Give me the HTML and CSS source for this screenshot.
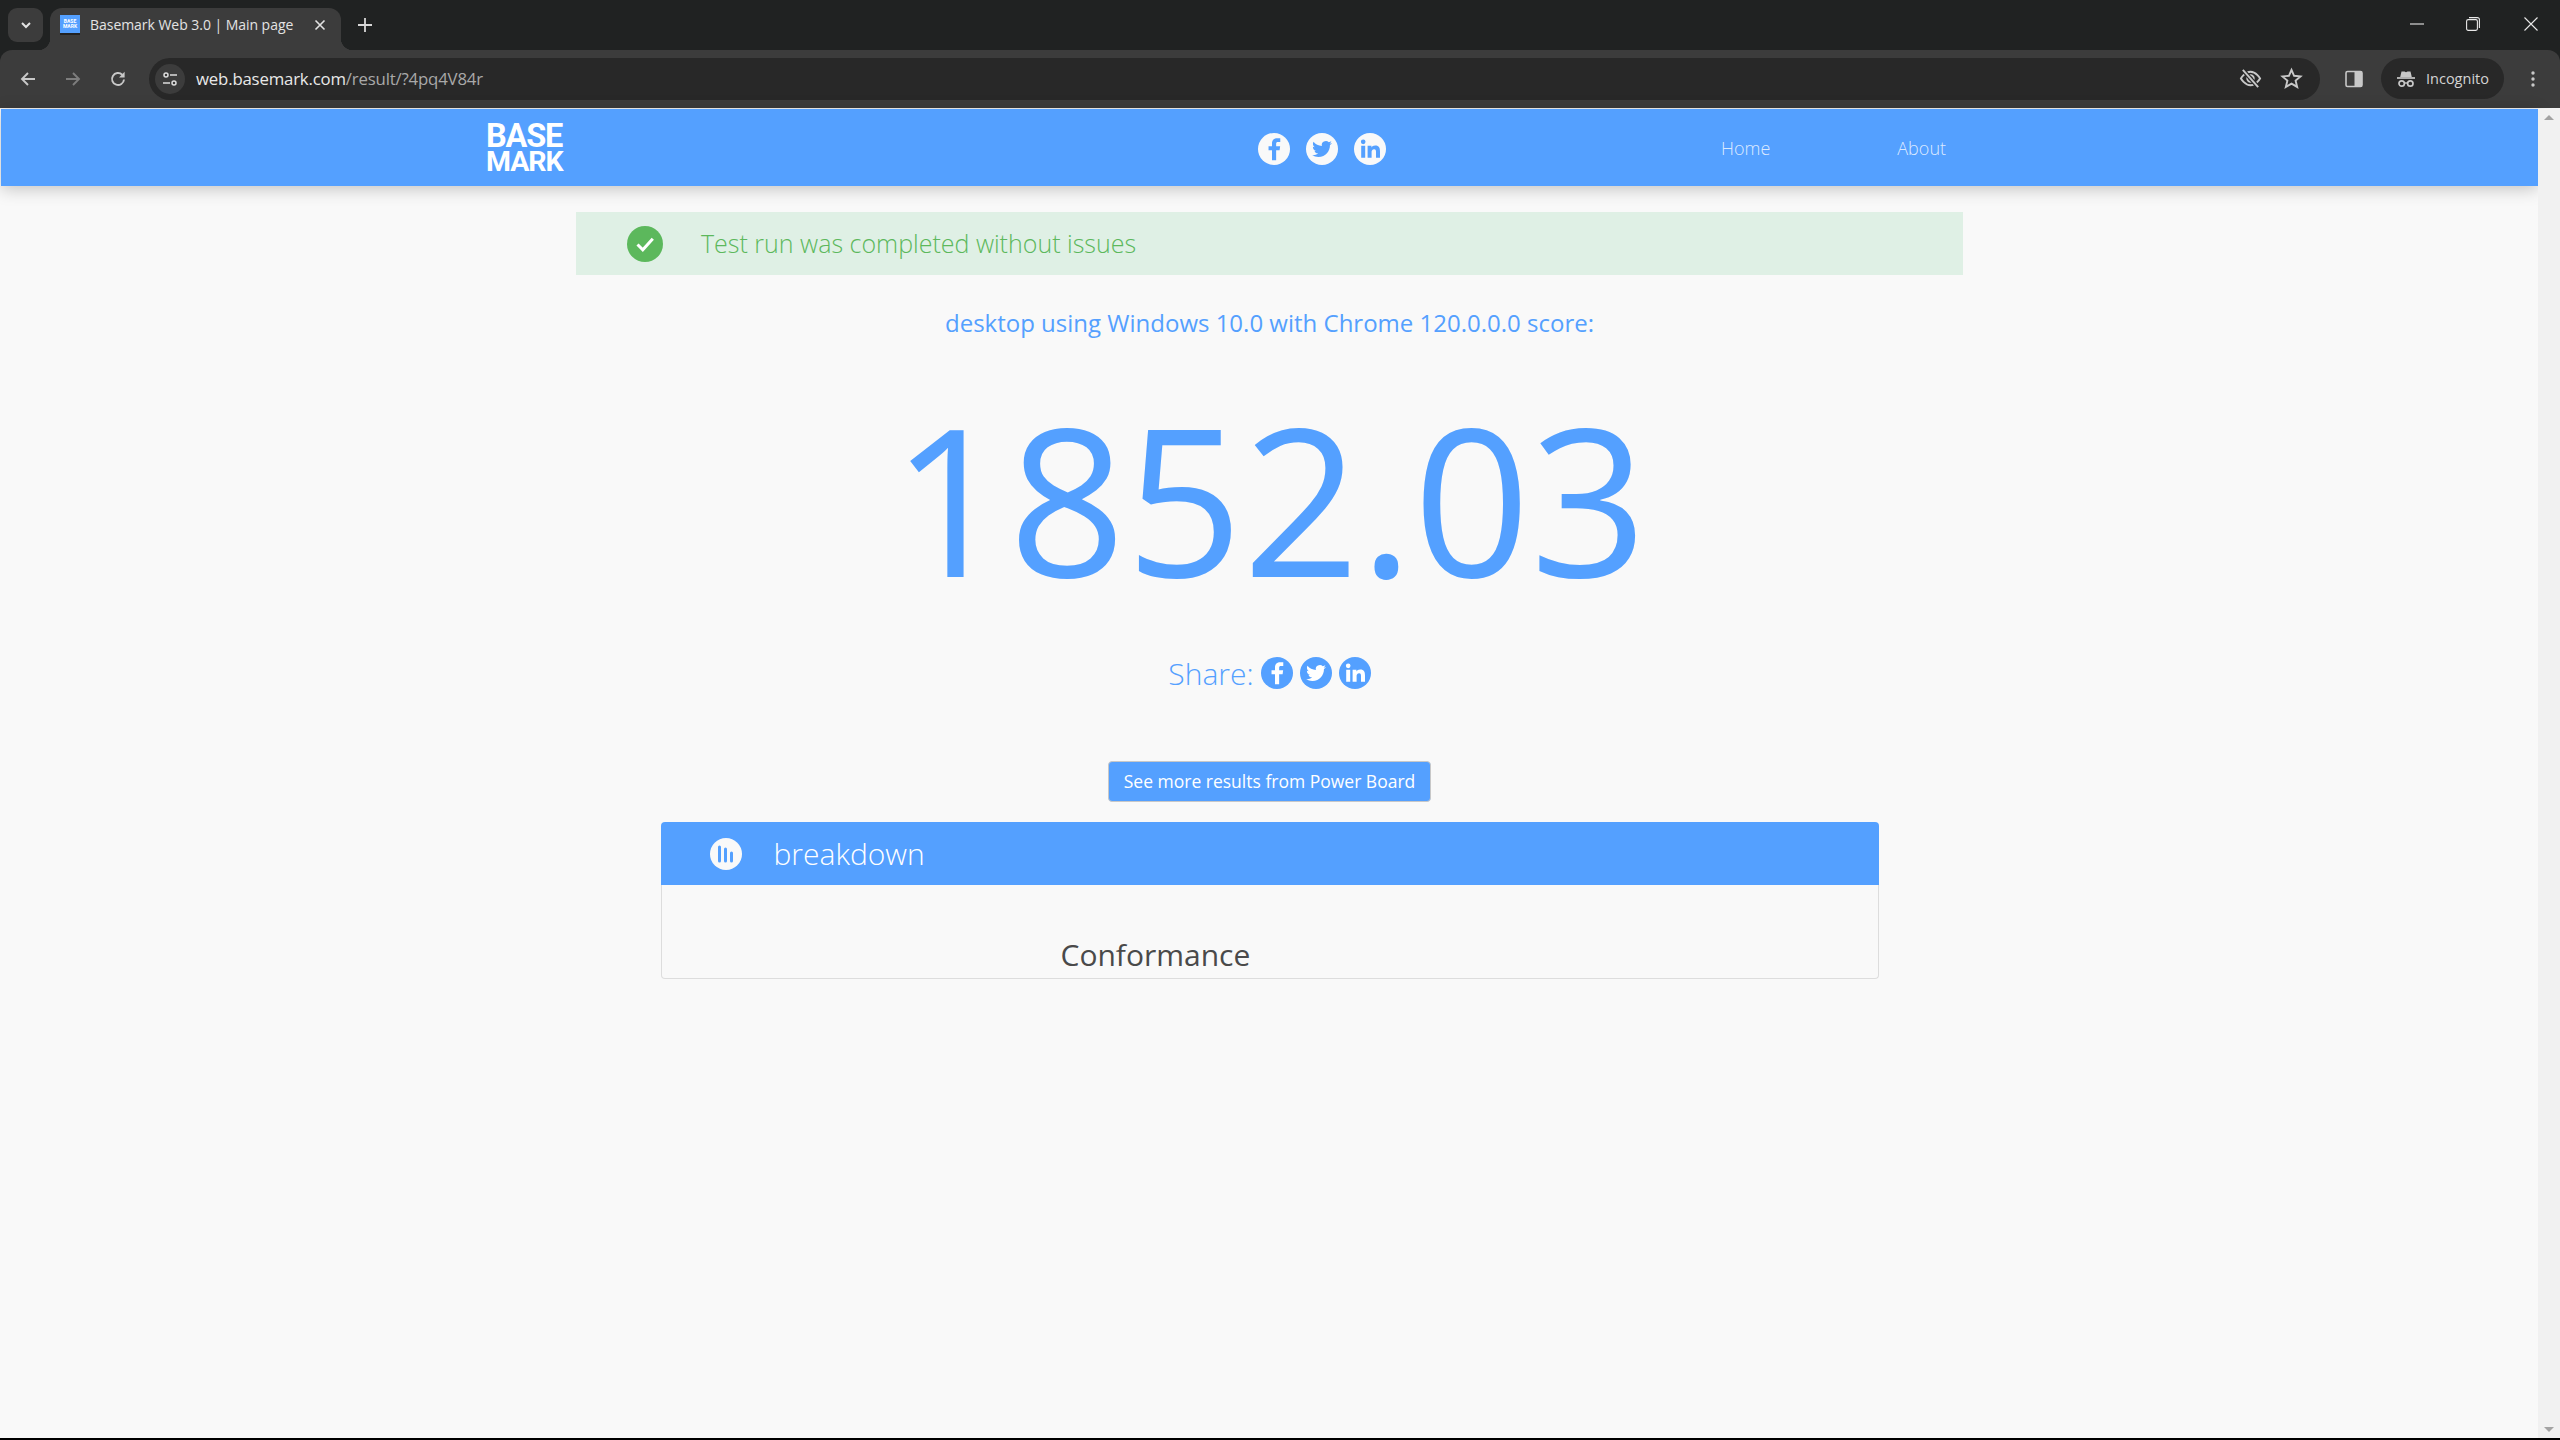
FILE: index.html
```html
<!DOCTYPE html>
<html lang="en">
<head>
<meta charset="utf-8">
<title>Basemark Web 3.0 | Main page</title>
<link rel="stylesheet" href="styles.css">
</head>
<body>
<svg class="defs" width="0" height="0" aria-hidden="true">
  <symbol id="i-fb" viewBox="0 0 24 24"><circle cx="12" cy="12" r="12" fill="currentColor"/><path fill="var(--glyph)" d="M13.6 20.5v-7.6h2.6l.4-3h-3V8.1c0-.9.3-1.4 1.5-1.4h1.6V4c-.3 0-1.2-.1-2.3-.1-2.3 0-3.9 1.4-3.9 4v2h-2.6v3h2.6v7.6z"/></symbol>
  <symbol id="i-tw" viewBox="0 0 24 24"><circle cx="12" cy="12" r="12" fill="currentColor"/><path fill="var(--glyph)" transform="translate(4.6 4.6) scale(.62)" d="M23.953 4.57a10 10 0 01-2.825.775 4.958 4.958 0 002.163-2.723c-.951.555-2.005.959-3.127 1.184a4.92 4.92 0 00-8.384 4.482C7.69 8.095 4.067 6.13 1.64 3.162a4.822 4.822 0 00-.666 2.475c0 1.71.87 3.213 2.188 4.096a4.904 4.904 0 01-2.228-.616v.06a4.923 4.923 0 003.946 4.827 4.996 4.996 0 01-2.212.085 4.936 4.936 0 004.604 3.417 9.867 9.867 0 01-6.102 2.105c-.39 0-.779-.023-1.17-.067a13.995 13.995 0 007.557 2.209c9.053 0 13.998-7.496 13.998-13.985 0-.21 0-.42-.015-.63A9.935 9.935 0 0024 4.59z"/></symbol>
  <symbol id="i-in" viewBox="0 0 24 24"><circle cx="12" cy="12" r="12" fill="currentColor"/><path fill="var(--glyph)" d="M5.4 9.6h3V18.6h-3z M6.9 4.9a1.75 1.75 0 110 3.5 1.75 1.75 0 010-3.5z M10.2 9.6h2.9v1.3c.4-.8 1.4-1.5 2.8-1.5 3 0 3.6 1.9 3.6 4.5v4.7h-3v-4.2c0-1 0-2.3-1.4-2.3s-1.9 1.1-1.9 2.2v4.3h-3z"/></symbol>
</svg>

<div class="browser">
  <header class="tabstrip">
    <div class="tabsearch">
      <svg class="ico12" viewBox="0 0 12 12"><path d="M2 4l4 4 4-4" fill="none" stroke="#e3e3e3" stroke-width="2"/></svg>
    </div>
    <div class="tab">
      <div class="favicon"><span>BASE<br>MARK</span></div>
      <span class="tabtitle">Basemark Web 3.0 | Main page</span>
      <svg class="tabclose" viewBox="0 0 12 12"><path d="M1.5 1.5l9 9M10.5 1.5l-9 9" stroke="#e3e3e3" stroke-width="1.6"/></svg>
    </div>
    <svg class="newtab" viewBox="0 0 14 14"><path d="M7 0v14M0 7h14" stroke="#d8d8d8" stroke-width="1.8"/></svg>
    <div class="winctl">
      <svg class="winbtn" viewBox="0 0 14 14"><path d="M0 7h14" stroke="#e8e8e8" stroke-width="1.1"/></svg>
      <svg class="winbtn" viewBox="0 0 14 14"><rect x=".6" y="2.6" width="10.8" height="10.8" rx="1.6" fill="none" stroke="#e8e8e8" stroke-width="1.1"/><path d="M3 .6h8.4a2 2 0 012 2V11" fill="none" stroke="#e8e8e8" stroke-width="1.1"/></svg>
      <svg class="winbtn" viewBox="0 0 14 14"><path d="M.5.5l13 13M13.5.5l-13 13" stroke="#e8e8e8" stroke-width="1.1"/></svg>
    </div>
  </header>

  <nav class="toolbar">
    <svg class="navico" viewBox="0 0 18 18"><path d="M16 9H3M9 3L3 9l6 6" fill="none" stroke="#c8c8c8" stroke-width="1.9"/></svg>
    <svg class="navico dim" viewBox="0 0 18 18"><path d="M2 9h13M9 3l6 6-6 6" fill="none" stroke="#7d7d7d" stroke-width="1.9"/></svg>
    <svg class="navico" viewBox="0 0 18 18"><path d="M15 9.5A6 6 0 1 1 13.2 4.7" fill="none" stroke="#c8c8c8" stroke-width="1.9"/><path d="M15.6 1.8v5.6H10z" fill="#c8c8c8"/></svg>
    <div class="omnibox">
      <div class="tune">
        <svg class="ico16" viewBox="0 0 16 16"><circle cx="4" cy="4" r="2" fill="none" stroke="#dcdcdc" stroke-width="1.5"/><path d="M8 4h7M1 12h7" stroke="#dcdcdc" stroke-width="1.5"/><circle cx="12" cy="12" r="2" fill="none" stroke="#dcdcdc" stroke-width="1.5"/></svg>
      </div>
      <div class="url"><span class="host">web.basemark.com</span><span class="path">/result/?4pq4V84r</span></div>
      <svg class="omniico" viewBox="0 0 24 24"><path d="M2 12s4-7 10-7 10 7 10 7-4 7-10 7-10-7-10-7z" fill="none" stroke="#c8c8c8" stroke-width="2"/><circle cx="12" cy="12" r="3.4" fill="none" stroke="#c8c8c8" stroke-width="2"/><path d="M4 3l16 18" stroke="#282828" stroke-width="4.5"/><path d="M4 3l16 18" stroke="#c8c8c8" stroke-width="2"/></svg>
      <svg class="omniico star" viewBox="0 0 24 24"><path d="M12 3l2.7 6.2 6.7.6-5.1 4.4 1.6 6.6L12 17.3l-5.9 3.5 1.6-6.6-5.1-4.4 6.7-.6z" fill="none" stroke="#c8c8c8" stroke-width="2"/></svg>
    </div>
    <svg class="sidepanel" viewBox="0 0 18 18"><rect x="1" y="1.500" width="16" height="15" rx="1.500" fill="none" stroke="#c8c8c8" stroke-width="1.6"/><rect x="9.500" y="1.500" width="7.500" height="15" fill="#c8c8c8"/></svg>
    <div class="incognito">
      <svg class="ico20" viewBox="0 0 20 20"><path d="M5.500 2.500h3l1.500 .8 1.500-.8h3l1.300 5.500H4.200z" fill="#c8c8c8"/><path d="M1 9h18" stroke="#c8c8c8" stroke-width="1.700"/><circle cx="5.700" cy="14.500" r="2.700" fill="none" stroke="#c8c8c8" stroke-width="1.700"/><circle cx="14.300" cy="14.500" r="2.700" fill="none" stroke="#c8c8c8" stroke-width="1.700"/><path d="M8.300 14h3.400" stroke="#c8c8c8" stroke-width="1.400"/></svg>
      <span>Incognito</span>
    </div>
    <svg class="kebab" viewBox="0 0 4 16"><circle cx="2" cy="2" r="1.700" fill="#c8c8c8"/><circle cx="2" cy="8" r="1.700" fill="#c8c8c8"/><circle cx="2" cy="14" r="1.700" fill="#c8c8c8"/></svg>
  </nav>

  <div class="viewport">
    <main class="page">
      <div class="sitenav">
        <div class="logo"><span class="logo-a">BASE</span><span class="logo-b">MARK</span></div>
        <div class="social">
          <svg class="soc"><use href="#i-fb"/></svg>
          <svg class="soc"><use href="#i-tw"/></svg>
          <svg class="soc"><use href="#i-in"/></svg>
        </div>
        <div class="links"><a class="lnk lnk-home">Home</a><a class="lnk lnk-about">About</a></div>
      </div>

      <section class="alert">
        <svg class="check" viewBox="0 0 36 36"><circle cx="18" cy="18" r="18" fill="#5cb85c"/><path d="M10.500 18.500l5.300 5.300 10-11" fill="none" stroke="#fff" stroke-width="3"/></svg>
        <span>Test run was completed without issues</span>
      </section>

      <h2 class="subtitle">desktop using Windows 10.0 with Chrome 120.0.0.0 score:</h2>
      <div class="score">1852.03</div>

      <div class="share">
        <span class="sharelabel">Share:</span>
        <svg class="soc blue"><use href="#i-fb"/></svg>
        <svg class="soc blue"><use href="#i-tw"/></svg>
        <svg class="soc blue"><use href="#i-in"/></svg>
      </div>

      <a class="powerbtn">See more results from Power Board</a>

      <section class="panel">
        <div class="panelhead">
          <svg class="bars" viewBox="0 0 32 32"><circle cx="16" cy="16" r="16" fill="#f9f9f9"/><g fill="none" stroke="#54a0ff" stroke-width="3" stroke-linecap="round"><path d="M9.500 9v14M15.500 11v12M21.500 15v8"/></g></svg>
          <span>breakdown</span>
        </div>
        <div class="panelbody"><h3>Conformance</h3></div>
      </section>
    </main>
    <aside class="scrollbar">
      <span class="arrow up"></span>
      <span class="arrow down"></span>
    </aside>
  </div>
  <div class="bottomline"></div>
</div>
</body>
</html>
```

FILE: styles.css
```css
* { box-sizing: border-box; }
html, body { margin: 0; height: 100%; overflow: hidden; background: #f9f9f9; }
body { font-family: "Open Sans", "Noto Sans", sans-serif; }
.defs { position: absolute; }
.browser { display: flex; flex-direction: column; height: 1440px; background: #202222; }

/* tab strip */
.tabstrip { height: 50px; background: #202222; display: flex; align-items: flex-start; flex: none; }
.tabsearch { width: 35px; height: 34px; margin: 8px 0 0 8px; border-radius: 9px; background: #3c3c3c; display: flex; align-items: center; justify-content: center; }
.ico12 { width: 12px; height: 12px; }
.tab { position: relative; width: 291px; height: 42px; margin: 8px 0 0 7px; background: #3c3c3c; border-radius: 12px 12px 0 0; display: flex; align-items: center; padding: 0 0 8px 10px; }
.tab::before, .tab::after { content: ""; position: absolute; bottom: 0; width: 12px; height: 12px; }
.tab::before { left: -12px; background: radial-gradient(circle at 0 0, transparent 12px, #3c3c3c 12.5px); }
.tab::after { right: -12px; background: radial-gradient(circle at 100% 0, transparent 12px, #3c3c3c 12.5px); }
.favicon { width: 20px; height: 20px; background: #54a0ff; border-bottom: 2px solid #222; display: flex; align-items: center; justify-content: center; flex: none; }
.favicon span { color: #fff; font: 700 5px/5px "Roboto", sans-serif; text-align: center; }
.tabtitle { margin-left: 10px; font: 14px/20px "Open Sans", sans-serif; color: #e3e3e3; white-space: nowrap; width: 210px; letter-spacing: -.04px; }
.tabclose { width: 12px; height: 12px; margin-left: 14px; flex: none; }
.newtab { width: 14px; height: 14px; margin: 18px 0 0 17px; flex: none; }
.winctl { margin-left: auto; display: flex; padding-top: 17px; }
.winbtn { width: 14px; height: 14px; }
.winbtn:nth-child(1) { margin-right: 42px; }
.winbtn:nth-child(2) { margin-right: 44px; }
.winbtn:nth-child(3) { margin-right: 22px; }

/* toolbar */
.toolbar { height: 58px; flex: none; background: #3c3c3c; border-radius: 12px 12px 0 0; display: flex; align-items: center; padding: 0 0 1px 19px; margin-top: 0; }
.navico { width: 18px; height: 18px; margin-right: 27px; flex: none; }
.omnibox { width: 2171px; height: 42px; margin-left: -5px; background: #282828; border-radius: 21px; display: flex; align-items: center; padding: 0 17px 0 6px; }
.tune { width: 30px; height: 30px; border-radius: 50%; background: #3c3c3c; display: flex; align-items: center; justify-content: center; flex: none; }
.ico16 { width: 16px; height: 16px; }
.url { margin-left: 11px; font: 16.8px/20px "Open Sans", sans-serif; white-space: nowrap; flex: 1; letter-spacing: -.18px; }
.host { color: #e8e8e8; }
.path { color: #a9a9a9; }
.omniico { width: 23px; height: 23px; flex: none; }
.star { margin-left: 18px; }
.sidepanel { width: 18px; height: 18px; margin-left: 25px; flex: none; }
.incognito { width: 123px; height: 41px; margin-left: 18px; border-radius: 21px; background: #282828; display: flex; align-items: center; padding-left: 15px; gap: 10px; color: #d4d4d4; font-size: 14.5px; flex: none; }
.ico20 { width: 20px; height: 20px; flex: none; }
.kebab { width: 4px; height: 16px; margin-left: 27px; flex: none; }

/* viewport */
.viewport { flex: 1; display: flex; min-height: 0; border-top: 1px solid #f4f4f4; }
.page { flex: 1; min-width: 0; display: flex; flex-direction: column; align-items: center; background: #f9f9f9; padding-left: 1px; }
.scrollbar { width: 22px; background: #f1f1f1; display: flex; flex-direction: column; justify-content: space-between; align-items: center; padding: 6px 0; flex: none; }
.arrow { width: 0; height: 0; border-left: 5px solid transparent; border-right: 5px solid transparent; }
.arrow.up { border-bottom: 5px solid #a3a3a3; }
.arrow.down { border-top: 5px solid #a3a3a3; }
.bottomline { height: 2px; background: #000; flex: none; }

/* site nav */
.sitenav { align-self: stretch; height: 77px; background: #54a0ff; box-shadow: 0 3px 16px rgba(0,0,0,.22); display: flex; align-items: center; flex: none; }
.logo { width: 77px; margin-left: 485px; color: #fff; font-family: "Roboto", sans-serif; font-weight: 700; }
.logo-a { display: block; font-size: 32.5px; line-height: 27px; letter-spacing: -1.2px; white-space: nowrap; }
.logo-b { display: block; font-size: 28.5px; line-height: 23px; letter-spacing: -1px; white-space: nowrap; }
.social { display: flex; gap: 16px; margin: 2px 0 0 695px; --glyph: #54a0ff; color: #f9f9f9; }
.soc { width: 32px; height: 32px; display: block; flex: none; }
.soc.blue { color: #54a0ff; --glyph: #fff; }
.links { display: flex; margin-left: 335px; }
.lnk { font-size: 18px; font-weight: 300; color: rgba(255,255,255,.8); line-height: 24px; }
.lnk-about { margin-left: 127px; }

/* alert */
.alert { width: 1387px; height: 63px; margin-top: 26px; background: #dff0e5; display: flex; align-items: center; padding-left: 51px; color: #5cb85c; font-size: 25px; font-weight: 300; flex: none; }
.alert span { position: relative; top: -1px; }
.check { width: 36px; height: 36px; margin-right: 38px; flex: none; }

.subtitle { margin: 30px 0 0; font-size: 24px; font-weight: 400; line-height: 36px; color: #54a0ff; }
.score { margin-top: 22px; font-size: 204.5px; font-weight: 400; line-height: 270px; color: #54a0ff; }
.share { display: flex; align-items: center; margin-top: 18px; gap: 7px; height: 44px; }
.sharelabel { font-size: 30px; font-weight: 300; color: #54a0ff; }
.powerbtn { margin-top: 66px; width: 323px; height: 41px; background: #54a0ff; border: 1px solid #c8c8c8; border-radius: 4px; color: #fff; font-size: 17.5px; line-height: 38px; text-align: center; flex: none; }

/* panel */
.panel { width: 1218px; margin-top: 20px; flex: none; }
.panelhead { height: 63px; background: #54a0ff; border-radius: 4px 4px 0 0; display: flex; align-items: center; padding-left: 49px; color: #fff; font-size: 30px; font-weight: 300; }
.bars { width: 32px; height: 32px; margin-right: 32px; flex: none; }
.panelbody { height: 94px; border: 1px solid #ddd; border-top: 0; border-radius: 0 0 4px 4px; overflow: hidden; padding: 50px 0 0 399px; }
.panelbody h3 { margin: 0; font-size: 30px; font-weight: 400; line-height: 40px; color: #4a4a4a; }
```
